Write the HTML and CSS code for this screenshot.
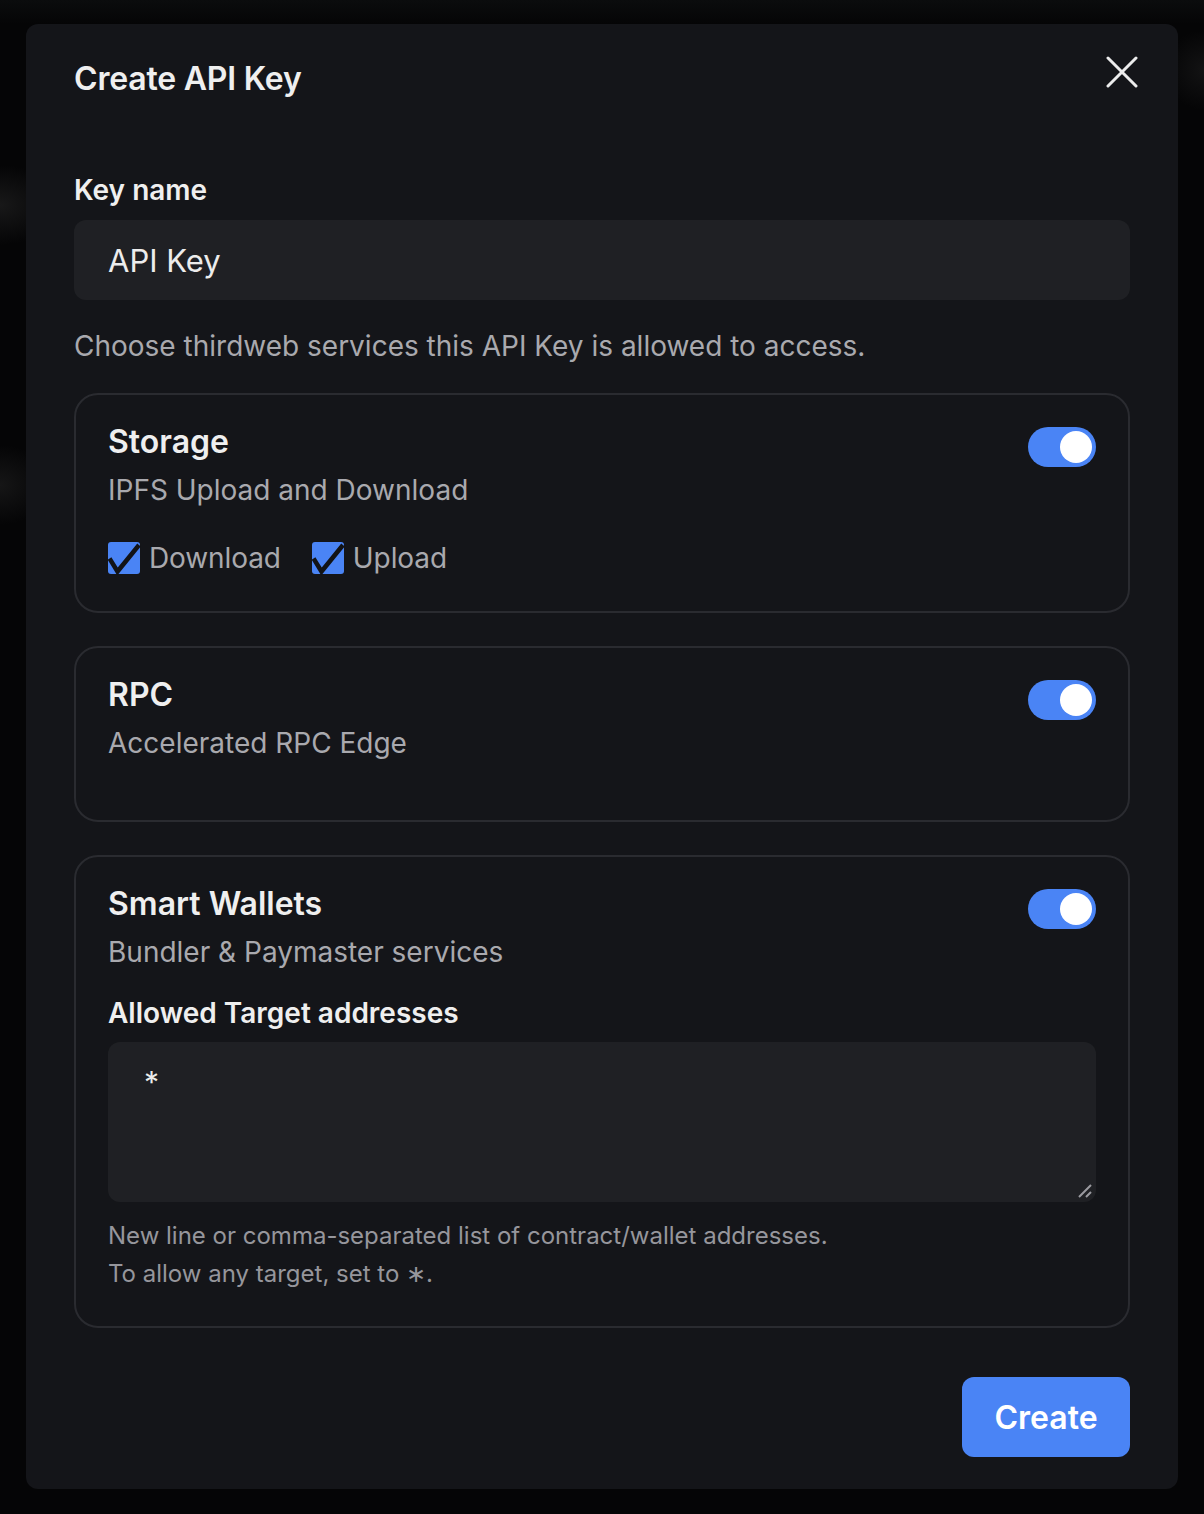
FILE: index.html
```html
<!DOCTYPE html>
<html lang="en">
<head>
<meta charset="utf-8">
<title>Create API Key</title>
<link rel="stylesheet" href="styles.css">
</head>
<body>
<div class="backdrop">
  <div class="modal">
    <div class="modal-header">
      <h2 class="modal-title">Create API Key</h2>
      <button class="close-btn" aria-label="Close">
        <svg width="32" height="32" viewBox="0 0 32 32"><path d="M2 2 L30 30 M30 2 L2 30" stroke="#ececec" stroke-width="3" stroke-linecap="round" fill="none"/></svg>
      </button>
    </div>

    <label class="field-label">Key name</label>
    <div class="text-input">API Key</div>

    <p class="intro">Choose thirdweb services this API Key is allowed to access.</p>

    <div class="card card-storage">
      <div class="card-head">
        <div>
          <div class="card-title">Storage</div>
          <div class="card-desc">IPFS Upload and Download</div>
        </div>
        <span class="toggle"><span class="knob"></span></span>
      </div>
      <div class="checks">
        <span class="check">
          <svg class="box" width="34" height="34" viewBox="0 0 34 34"><rect x="0" y="0" width="32" height="32" rx="3" fill="#4a84f5"/><path d="M1.5 16.5 L9.5 29.5 L31 3" stroke="#121316" stroke-width="4.5" fill="none" stroke-linejoin="miter"/></svg>
          Download
        </span>
        <span class="check">
          <svg class="box" width="34" height="34" viewBox="0 0 34 34"><rect x="0" y="0" width="32" height="32" rx="3" fill="#4a84f5"/><path d="M1.5 16.5 L9.5 29.5 L31 3" stroke="#121316" stroke-width="4.5" fill="none" stroke-linejoin="miter"/></svg>
          Upload
        </span>
      </div>
    </div>

    <div class="card card-rpc">
      <div class="card-head">
        <div>
          <div class="card-title">RPC</div>
          <div class="card-desc">Accelerated RPC Edge</div>
        </div>
        <span class="toggle"><span class="knob"></span></span>
      </div>
    </div>

    <div class="card card-wallets">
      <div class="card-head">
        <div>
          <div class="card-title">Smart Wallets</div>
          <div class="card-desc">Bundler &amp; Paymaster services</div>
        </div>
        <span class="toggle"><span class="knob"></span></span>
      </div>
      <div class="sub-label">Allowed Target addresses</div>
      <div class="textarea">
        <span class="textarea-value">*</span>
        <svg class="grip" width="16" height="16" viewBox="0 0 16 16"><path d="M2 14 L14 2 M9 14 L14 9" stroke="#9a9aa0" stroke-width="2" fill="none"/></svg>
      </div>
      <p class="helper">New line or comma-separated list of contract/wallet addresses.<br>To allow any target, set to ∗.</p>
    </div>

    <div class="footer">
      <button class="primary-btn">Create</button>
    </div>
  </div>
</div>
</body>
</html>
```

FILE: styles.css
```css
* { box-sizing: border-box; }

html, body {
  margin: 0;
  padding: 0;
}

body {
  background: #050506;
  font-family: Inter, "Noto Sans", "Liberation Sans", sans-serif;
  color: #ededed;
  width: 1204px;
  height: 1514px;
  overflow: hidden;
}

.backdrop {
  padding: 24px 26px 0 26px;
  background:
    radial-gradient(ellipse 60px 40px at 0px 205px, rgba(60,60,60,0.35), transparent),
    radial-gradient(ellipse 50px 40px at 0px 485px, rgba(60,60,60,0.3), transparent),
    radial-gradient(ellipse 40px 40px at 1204px 70px, rgba(60,60,60,0.25), transparent),
    linear-gradient(#0b0c0d 0, #050506 24px);
  height: 1514px;
}

.modal {
  width: 1152px;
  height: 1465px;
  background: #141519;
  border-radius: 12px;
  padding: 36px 48px 32px 48px;
  display: flex;
  flex-direction: column;
}
.modal > * { flex-shrink: 0; }

.modal-header {
  display: flex;
  justify-content: space-between;
  align-items: flex-start;
}

.modal-title {
  margin: 0;
  font-size: 32px;
  line-height: 38px;
  font-weight: 600;
  color: #efefef;
  letter-spacing: -0.2px;
}

.close-btn {
  background: none;
  border: 0;
  padding: 0;
  margin: -4px -8px 0 0;
  width: 32px;
  height: 32px;
  display: block;
}
.close-btn svg { display: block; }

.field-label {
  display: block;
  margin-top: 72px;
  font-size: 28px;
  line-height: 40px;
  font-weight: 600;
  color: #efefef;
}

.text-input {
  margin-top: 10px;
  height: 80px;
  border-radius: 12px;
  background: #1f2024;
  padding: 0 34px;
  display: flex;
  align-items: center;
  font-size: 31px;
  color: #ececec;
}

.intro {
  margin: 26px 0 27px 0;
  font-size: 28px;
  line-height: 40px;
  color: #a9a9ae;
}

.card {
  border: 2px solid #2a2b30;
  border-radius: 24px;
  padding: 28px 32px 33px 32px;
  margin-bottom: 33px;
}

.card-rpc { padding-bottom: 57px; }

.card-head {
  display: flex;
  justify-content: space-between;
  align-items: flex-start;
}

.card-title {
  font-size: 32px;
  line-height: 38px;
  font-weight: 600;
  color: #efefef;
}

.card-desc {
  margin-top: 9px;
  font-size: 28px;
  line-height: 40px;
  color: #a9a9ae;
}

.toggle {
  margin-top: 4px;
  width: 68px;
  height: 40px;
  border-radius: 20px;
  background: #4a84f5;
  display: flex;
  align-items: center;
  justify-content: flex-end;
  padding: 4px;
}
.knob {
  width: 32px;
  height: 32px;
  border-radius: 50%;
  background: #ffffff;
}

.checks {
  margin-top: 28px;
  display: flex;
  gap: 31px;
}
.check {
  display: flex;
  align-items: center;
  gap: 7px;
  font-size: 28px;
  line-height: 40px;
  color: #a9a9ae;
  letter-spacing: -0.1px;
}
.check .box { display: block; margin-bottom: -2px; }

.sub-label {
  margin-top: 21px;
  font-size: 28px;
  line-height: 40px;
  font-weight: 600;
  color: #efefef;
}

.textarea {
  position: relative;
  margin-top: 9px;
  height: 160px;
  border-radius: 12px;
  background: #1f2024;
  padding: 20px 36px;
  font-size: 30px;
  line-height: 40px;
  color: #ececec;
}
.grip {
  position: absolute;
  right: 3px;
  bottom: 3px;
}

.helper {
  margin: 15px 0 0 0;
  font-size: 24px;
  line-height: 38px;
  color: #96969c;
}

.footer {
  margin-top: 16px;
  display: flex;
  justify-content: flex-end;
}

.primary-btn {
  width: 168px;
  height: 80px;
  border: 0;
  border-radius: 12px;
  background: #4a84f5;
  color: #ffffff;
  font-family: Inter, "Noto Sans", "Liberation Sans", sans-serif;
  font-size: 32px;
  font-weight: 600;
}
```
